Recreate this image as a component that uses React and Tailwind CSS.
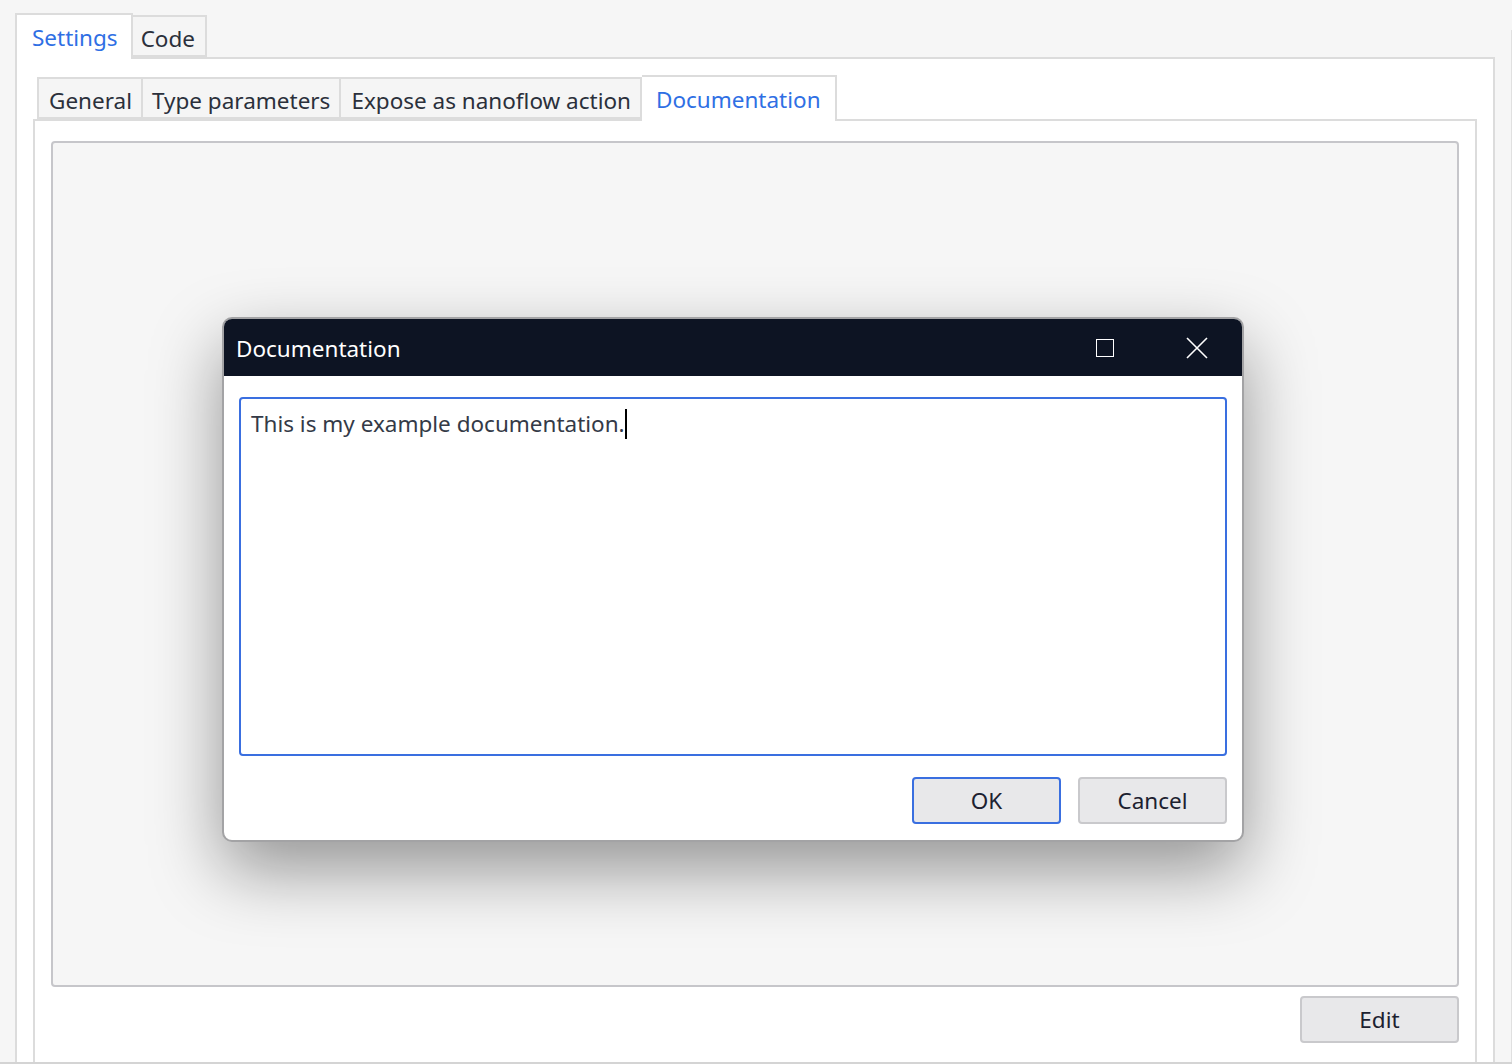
import React from "react";

const font = { fontFamily: '"Noto Sans", "Open Sans", sans-serif' };

function Tab({ children, active, className = "" }) {
  return (
    <div
      className={
        "border-2 border-[#dcdcdc] leading-none flex items-center " +
        (active
          ? "bg-white border-b-0 text-[#2f6fe4] relative z-10 -mb-[2px] "
          : "bg-[#f5f5f5] text-[#2b303b] ") +
        className
      }
    >
      {children}
    </div>
  );
}

export default function App() {
  return (
    <div
      className="w-[1512px] h-[1064px] bg-[#f6f6f6] relative overflow-hidden text-[22.5px]"
      style={font}
    >
      {/* outer settings area */}
      <div className="pl-[15px] pr-[17px] pt-[13px] flex flex-col h-full">
        <div className="flex items-end">
          <Tab active className="h-[46px] pt-[2px] pl-[15px] pr-[13px]">Settings</Tab>
          <Tab className="h-[42px] border-l-0 pt-[6px] pl-[8px] pr-[10px]">Code</Tab>
        </div>
        <div className="flex-1 bg-white border-2 border-[#dcdcdc] border-b-0 px-[16px] pt-[16px] flex flex-col">
          <div className="flex items-end ml-[4px]">
            <Tab className="h-[42px] pt-[6px] pl-[10px] pr-[9px]">General</Tab>
            <Tab className="h-[42px] border-l-0 pt-[6px] px-[9px]">Type parameters</Tab>
            <Tab className="h-[42px] border-l-0 pt-[6px] pl-[10px] pr-[9px]">Expose as nanoflow action</Tab>
            <Tab active className="h-[46px] border-l-0 pt-[2px] px-[14px]">Documentation</Tab>
          </div>
          <div className="flex-1 border-2 border-[#dcdcdc] border-b-0 pl-[16px] pr-[16px] pt-[20px] flex flex-col">
            <div className="h-[846px] bg-[#f6f6f6] border-2 border-[#c6c6ca] rounded-[4px]" />
            <div className="flex justify-end mt-[9px]">
              <button className="w-[159px] h-[47px] pt-[2px] bg-[#e8e8ea] border-2 border-[#c9c9cc] rounded-[4px] text-[#1c2130] leading-none">
                Edit
              </button>
            </div>
          </div>
        </div>
      </div>

      {/* window edge lines */}
      <div className="absolute right-0 top-[30px] bottom-0 w-[1px] bg-[#e0e0e0]" />
      <div className="absolute left-0 right-0 bottom-0 h-[2px] bg-[#d4d4d4]" />

      {/* dialog */}
      <div className="absolute left-[222px] top-[317px] w-[1022px] h-[525px] rounded-[10px] border-2 border-[#a3a3a5] bg-white overflow-hidden shadow-[0_28px_70px_rgba(0,0,0,0.4)] flex flex-col">
        <div className="h-[57px] bg-[#0d1423] flex items-center pl-[12px] text-white shrink-0">
          <span className="flex-1 leading-none pt-[4px]">Documentation</span>
          <div className="w-[18px] h-[18px] border border-white mr-[72px]" />
          <svg width="22" height="22" viewBox="0 0 22 22" className="mr-[34px]">
            <path d="M1 1 L21 21 M21 1 L1 21" stroke="white" strokeWidth="1.6" />
          </svg>
        </div>
        <div className="flex-1 px-[15px] pt-[21px] pb-[15px] flex flex-col">
          <div className="h-[359px] border-2 border-[#3a6fe0] rounded-[4px] px-[10px] pt-[10px] text-[#343a47] leading-[30px]">
            This is my example documentation.
            <span className="inline-block w-[2px] h-[30px] bg-black align-top" />
          </div>
          <div className="flex justify-end gap-[17px] mt-[21px]">
            <button className="w-[149px] h-[47px] pt-[2px] bg-[#e8e8ea] border-2 border-[#3a6fe0] rounded-[4px] text-[#1c2130] leading-none">
              OK
            </button>
            <button className="w-[149px] h-[47px] pt-[2px] bg-[#e8e8ea] border-2 border-[#c9c9cc] rounded-[4px] text-[#1c2130] leading-none">
              Cancel
            </button>
          </div>
        </div>
      </div>
    </div>
  );
}
